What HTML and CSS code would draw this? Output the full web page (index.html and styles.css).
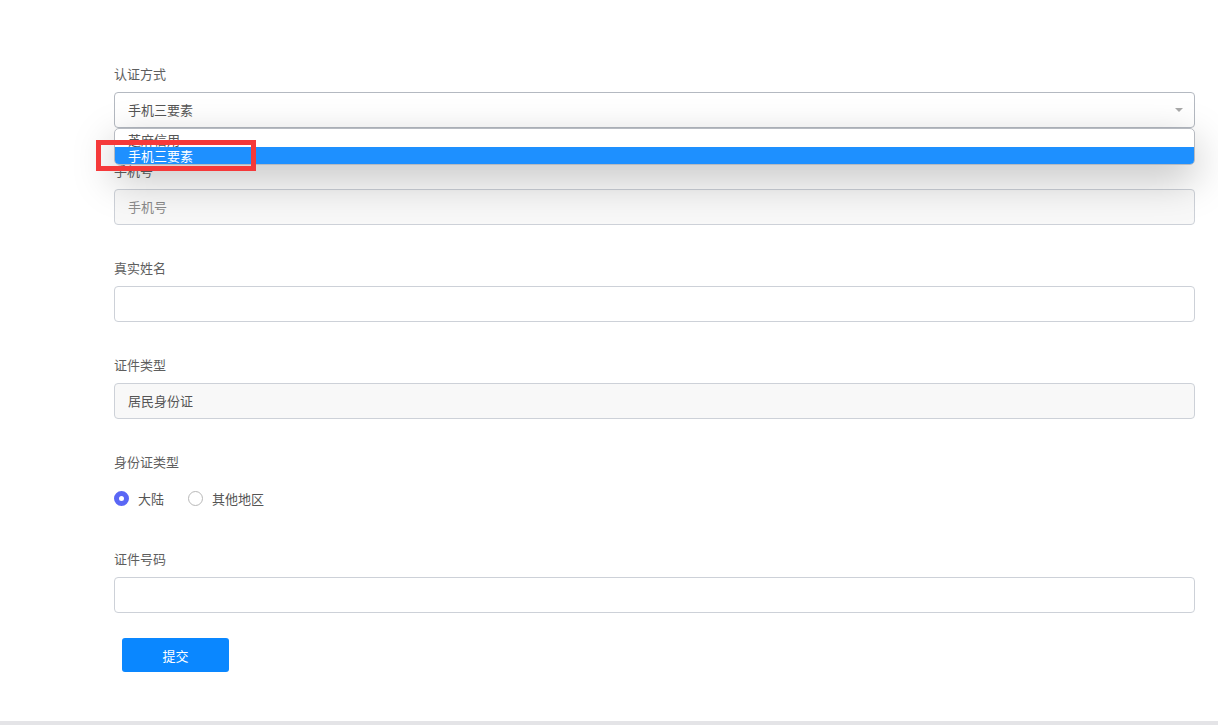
FILE: index.html
```html
<!DOCTYPE html>
<html lang="zh-CN">
<head>
  <meta charset="UTF-8" />
  <meta name="viewport" content="width=device-width, initial-scale=1.0"/>
  <title>实名认证</title>
  <link rel="stylesheet" href="styles.css">
</head>
<body>
  <div class="page">
    <form class="form">
      <div class="field">
        <div class="label">认证方式</div>
        <div class="select-wrap">
          <div class="select">
            <span>手机三要素</span>
            <span class="arrow"></span>
          </div>
          <div class="dropdown">
            <div class="option first">芝麻信用</div>
            <div class="option active">手机三要素</div>
          </div>
          <div class="highlight"></div>
        </div>
      </div>

      <div class="field">
        <div class="label">手机号</div>
        <div class="input disabled placeholder">手机号</div>
      </div>

      <div class="field">
        <div class="label">真实姓名</div>
        <div class="input"></div>
      </div>

      <div class="field">
        <div class="label">证件类型</div>
        <div class="input disabled">居民身份证</div>
      </div>

      <div class="field">
        <div class="label">身份证类型</div>
        <div class="radios">
          <label class="radio"><span class="dot checked"></span>大陆</label>
          <label class="radio"><span class="dot"></span>其他地区</label>
        </div>
      </div>

      <div class="field last">
        <div class="label">证件号码</div>
        <div class="input"></div>
      </div>

      <button type="button" class="submit">提交</button>
    </form>
  </div>
  <div class="footer-line"></div>
</body>
</html>
```

FILE: styles.css
```css
body {
  margin: 0;
  background: #fff;
  font-family: "Noto Sans CJK SC", "Noto Sans", sans-serif;
  font-size: 13px;
  color: #555;
}

.page {
  height: 721px;
  box-sizing: border-box;
  padding: 65px 23px 0 114px;
  overflow: hidden;
}

.field {
  margin-bottom: 34px;
}

.field.last {
  margin-bottom: 25px;
}

.label {
  height: 18px;
  line-height: 18px;
  margin-bottom: 9px;
  color: #5e5e5e;
}

.input,
.select {
  height: 36px;
  box-sizing: border-box;
  border: 1px solid #cdd1d8;
  border-radius: 4px;
  background: #fff;
  padding: 0 13px;
  line-height: 34px;
  color: #555;
}

.input.disabled {
  background: #f8f8f8;
}

.placeholder {
  color: #8a8a8a;
}

.select-wrap {
  position: relative;
}

.select {
  display: flex;
  justify-content: space-between;
  align-items: center;
  border-color: #b4b9c1;
}

.arrow {
  width: 0;
  height: 0;
  border-left: 4px solid transparent;
  border-right: 4px solid transparent;
  border-top: 4px solid #a9a9a9;
  margin-right: -2px;
}

.dropdown {
  position: absolute;
  top: 36px;
  left: 0;
  right: 0;
  height: 37px;
  box-sizing: border-box;
  border: 1px solid #b6bac1;
  border-radius: 5px;
  background: #fff;
  overflow: hidden;
  box-shadow: 0 14px 42px rgba(0, 0, 0, 0.26);
  z-index: 10;
}

.option {
  height: 18px;
  padding-left: 13px;
  overflow: hidden;
  line-height: 18px;
}

.option.first {
  line-height: 22px;
  color: #555;
}

.option.active {
  background: #1e90ff;
  color: #fff;
}

.highlight {
  position: absolute;
  top: 48px;
  left: -18px;
  width: 150px;
  height: 21px;
  border: 5px solid #f5393a;
  z-index: 11;
}

.radios {
  height: 36px;
  display: flex;
  align-items: center;
  gap: 24px;
}

.radio {
  display: flex;
  align-items: center;
  gap: 9px;
  color: #555;
}

.dot {
  width: 15px;
  height: 15px;
  box-sizing: border-box;
  border: 1px solid #b8b8b8;
  border-radius: 50%;
  background: #fff;
}

.dot.checked {
  border: 5px solid #5a67f5;
}

.submit {
  margin-left: 8px;
  width: 107px;
  height: 34px;
  border: none;
  border-radius: 3px;
  background: #0a87ff;
  color: #fff;
  font-family: inherit;
  font-size: 13px;
}

.footer-line {
  height: 4px;
  background: #e4e4e7;
}
```
